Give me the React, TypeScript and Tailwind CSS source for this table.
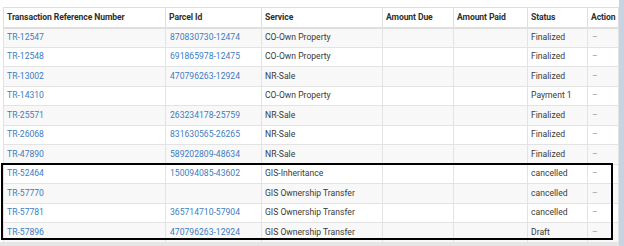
import React from "react";

type Row = {
  ref: string;
  parcel: string;
  service: string;
  status: string;
};

const rows: Row[] = [
  { ref: "TR-12547", parcel: "870830730-12474", service: "CO-Own Property", status: "Finalized" },
  { ref: "TR-12548", parcel: "691865978-12475", service: "CO-Own Property", status: "Finalized" },
  { ref: "TR-13002", parcel: "470796263-12924", service: "NR-Sale", status: "Finalized" },
  { ref: "TR-14310", parcel: "", service: "CO-Own Property", status: "Payment 1" },
  { ref: "TR-25571", parcel: "263234178-25759", service: "NR-Sale", status: "Finalized" },
  { ref: "TR-26068", parcel: "831630565-26265", service: "NR-Sale", status: "Finalized" },
  { ref: "TR-47890", parcel: "589202809-48634", service: "NR-Sale", status: "Finalized" },
  { ref: "TR-52464", parcel: "150094085-43602", service: "GIS-Inheritance", status: "cancelled" },
  { ref: "TR-57770", parcel: "", service: "GIS Ownership Transfer", status: "cancelled" },
  { ref: "TR-57781", parcel: "365714710-57904", service: "GIS Ownership Transfer", status: "cancelled" },
  { ref: "TR-57896", parcel: "470796263-12924", service: "GIS Ownership Transfer", status: "Draft" },
];

const headers = [
  { label: "Transaction Reference Number", w: "w-[162px]" },
  { label: "Parcel Id", w: "w-[96px]" },
  { label: "Service", w: "w-[121px]" },
  { label: "Amount Due", w: "w-[71px]" },
  { label: "Amount Paid", w: "w-[74px]" },
  { label: "Status", w: "w-[60px]" },
  { label: "Action", w: "w-[31px]" },
];

export default function App() {
  return (
    <div className="relative w-[624px] h-[246px] overflow-hidden bg-white font-['Roboto',sans-serif] text-[8.6px] text-[#3a3a3a]">
      <div className="flex">
        <div className="pt-[7px] pl-[3px] w-[619px]">
          <table className="table-fixed border-collapse w-[615px]">
            <thead>
              <tr className="h-[20px] bg-white">
                {headers.map((h) => (
                  <th
                    key={h.label}
                    className={`${h.w} border border-[#dedede] border-b-2 px-[3px] text-left font-bold text-[#2f2f2f] whitespace-nowrap tracking-[-0.1px]`}
                  >
                    {h.label}
                  </th>
                ))}
              </tr>
            </thead>
            <tbody>
              {rows.map((r, i) => (
                <tr key={r.ref} className={`h-[19.5px] ${i % 2 === 0 ? "bg-[#f8f8f8]" : "bg-white"}`}>
                  <td className="border border-[#e3e3e3] px-[3px] text-[#3d7cbf]">{r.ref}</td>
                  <td className="border border-[#e3e3e3] px-[4px] text-[#3d7cbf]">{r.parcel}</td>
                  <td className="border border-[#e3e3e3] px-[3px] whitespace-nowrap">{r.service}</td>
                  <td className="border border-[#e3e3e3] px-[3px]"></td>
                  <td className="border border-[#e3e3e3] px-[3px]"></td>
                  <td className="border border-[#e3e3e3] px-[3px] whitespace-nowrap">{r.status}</td>
                  <td className="border border-[#e3e3e3] px-[4px] text-[#999]">–</td>
                </tr>
              ))}
            </tbody>
          </table>
        </div>
        <div className="w-[5px] h-[246px] bg-[#c8d3e2]" />
      </div>

      {/* bottom scrollbar strip */}
      <div className="absolute left-0 bottom-0 w-[619px] h-[4px] bg-[#e6e6e6]" />

      {/* annotation box */}
      <div className="absolute left-[1px] top-[163px] w-[612px] h-[77px] border-2 border-black" />
    </div>
  );
}
